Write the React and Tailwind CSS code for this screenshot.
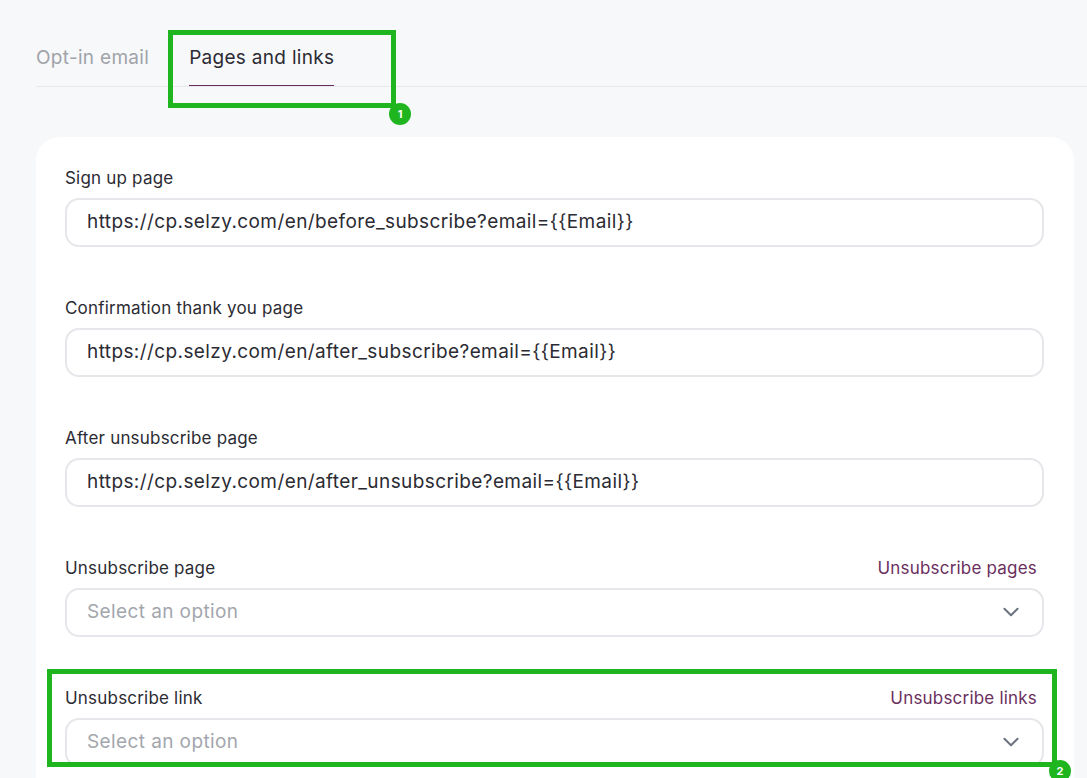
const Chevron = () => (
  <svg width="22" height="22" viewBox="0 0 20 20" fill="none" stroke="#6b7280" strokeWidth="1.8" strokeLinecap="round" strokeLinejoin="round">
    <path d="M4 7l6 6 6-6" />
  </svg>
);

const Field = ({ label, value, link, select }) => (
  <div className="flex flex-col">
    <div className="flex items-center justify-between h-[24px] mb-[7px] pr-[7px]">
      <span className="text-[17px] tracking-[0.2px] text-[#2b2b33]">{label}</span>
      {link && <span className="text-[17px] tracking-[0.2px] text-[#6b2f5e]">{link}</span>}
    </div>
    <div className="h-[49px] rounded-[14px] border-2 border-[#e6e7ea] bg-white flex items-center justify-between pl-[20px] pr-[20px]">
      <span className={"text-[19px] tracking-[0.4px] " + (select ? "text-[#a3a6ad]" : "text-[#2b2b33]")}>{value}</span>
      {select && <Chevron />}
    </div>
  </div>
);

const Badge = ({ n }) => (
  <div className="absolute w-[22px] h-[22px] rounded-full bg-[#1fb51f] text-white text-[11px] font-bold flex items-center justify-center">
    {n}
  </div>
);

export default function App() {
  return (
    <div className="relative w-[1087px] h-[778px] overflow-hidden bg-[#f7f8fa]" style={{ fontFamily: "Inter, 'Noto Sans', sans-serif" }}>
      <div className="ml-[36px] pt-[44px] flex border-b border-[#e8e9ec]">
        <div className="text-[19px] tracking-[0.3px] text-[#a0a3a9] pb-[13px]">Opt-in email</div>
        <div className="ml-[40px] text-[19px] tracking-[0.3px] text-[#2b2b33] pb-[12px] border-b border-[#6b2f5e]">Pages and links</div>
      </div>
      <div className="mt-[50px] ml-[36px] w-[1038px] bg-white rounded-[24px] pt-[30px] pl-[29px] pr-[30px] pb-[40px] flex flex-col gap-[50px]">
        <Field label="Sign up page" value="https://cp.selzy.com/en/before_subscribe?email={{Email}}" />
        <Field label="Confirmation thank you page" value="https://cp.selzy.com/en/after_subscribe?email={{Email}}" />
        <Field label="After unsubscribe page" value="https://cp.selzy.com/en/after_unsubscribe?email={{Email}}" />
        <Field label="Unsubscribe page" value="Select an option" link="Unsubscribe pages" select />
        <Field label="Unsubscribe link" value="Select an option" link="Unsubscribe links" select />
      </div>

      <div className="absolute left-[168px] top-[30px] w-[228px] h-[78px] border-[5px] border-[#1fb51f]" />
      <div className="absolute left-[389px] top-[103px]"><Badge n="1" /></div>
      <div className="absolute left-[47px] top-[669px] w-[1010px] h-[98px] border-[5px] border-[#1fb51f]" />
      <div className="absolute left-[1049px] top-[760px]"><Badge n="2" /></div>
    </div>
  );
}
